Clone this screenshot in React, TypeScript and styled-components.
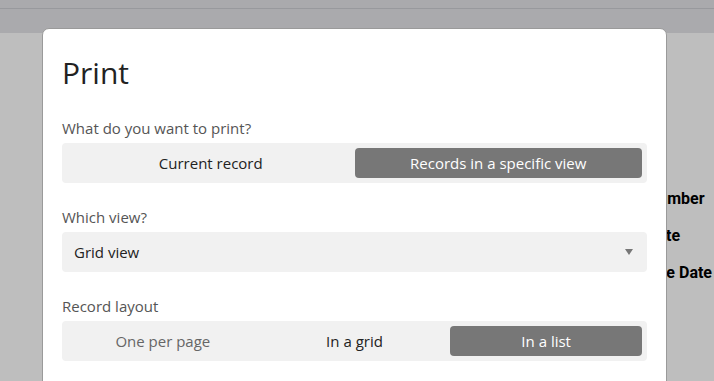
import styled, { createGlobalStyle } from 'styled-components'

const GlobalStyle = createGlobalStyle`
  html, body {
    margin: 0;
    padding: 0;
    width: 714px;
    height: 381px;
    overflow: hidden;
    background: #ffffff;
  }
`

const Page = styled.div`
  position: relative;
  width: 714px;
  height: 381px;
  overflow: hidden;
  font-family: 'Open Sans', 'Noto Sans', sans-serif;
`

const TopBar = styled.div`
  height: 33px;
  background: #e4e5e9;
  border-top: 8px solid #e4e5e9;
  box-sizing: border-box;

  &::before {
    content: '';
    display: block;
    height: 1px;
    background: #cdced3;
  }
`

const FieldList = styled.div`
  display: flex;
  flex-direction: column;
  gap: 17px;
  padding: 156px 0 0 647px;
  font-family: Roboto, 'Liberation Sans', sans-serif;
  font-weight: 700;
  font-size: 16px;
  line-height: 20px;
  color: #000;
  white-space: nowrap;
`

const Backdrop = styled.div`
  position: absolute;
  inset: 0;
  background: rgba(0, 0, 0, 0.255);
`

const Modal = styled.div`
  position: absolute;
  left: 42px;
  top: 28px;
  width: 625px;
  height: 400px;
  box-sizing: border-box;
  background: #fff;
  border: 1px solid #9a9a9a;
  border-radius: 7px;
  padding: 24px 19px;
  display: flex;
  flex-direction: column;
`

const Title = styled.h1`
  margin: 0 0 25px;
  font-size: 30px;
  line-height: 40px;
  font-weight: 400;
  color: #222;
`

const Section = styled.div`
  display: flex;
  flex-direction: column;
  margin-bottom: 24px;
`

const Label = styled.div`
  font-size: 15px;
  line-height: 20px;
  color: #555;
  margin-bottom: 5px;
`

const Segmented = styled.div<{ $cols: number }>`
  display: grid;
  grid-template-columns: repeat(${p => p.$cols}, 1fr);
  height: 40px;
  box-sizing: border-box;
  padding: 5px;
  background: #f1f1f1;
  border-radius: 4px;
`

const Option = styled.div<{ $active?: boolean; $muted?: boolean }>`
  display: flex;
  align-items: center;
  justify-content: center;
  border-radius: 4px;
  font-size: 15px;
  background: ${p => (p.$active ? '#777777' : 'transparent')};
  color: ${p => (p.$active ? '#ffffff' : p.$muted ? '#666' : '#222')};
`

const Select = styled.div`
  display: flex;
  align-items: center;
  justify-content: space-between;
  height: 40px;
  box-sizing: border-box;
  padding: 0 14px 0 12px;
  background: #f1f1f1;
  border-radius: 4px;
  font-size: 15px;
  color: #222;
`

const Caret = styled.span`
  width: 0;
  height: 0;
  border-left: 4px solid transparent;
  border-right: 4px solid transparent;
  border-top: 6px solid #777;
`

export default function App() {
  return (
    <Page>
      <GlobalStyle />
      <TopBar />
      <FieldList>
        <span>Number</span>
        <span>Date</span>
        <span>Due Date</span>
      </FieldList>
      <Backdrop />
      <Modal>
        <Title>Print</Title>
        <Section>
          <Label>What do you want to print?</Label>
          <Segmented $cols={2}>
            <Option>Current record</Option>
            <Option $active>Records in a specific view</Option>
          </Segmented>
        </Section>
        <Section>
          <Label>Which view?</Label>
          <Select>
            <span>Grid view</span>
            <Caret />
          </Select>
        </Section>
        <Section>
          <Label>Record layout</Label>
          <Segmented $cols={3}>
            <Option $muted>One per page</Option>
            <Option>In a grid</Option>
            <Option $active>In a list</Option>
          </Segmented>
        </Section>
      </Modal>
    </Page>
  )
}
